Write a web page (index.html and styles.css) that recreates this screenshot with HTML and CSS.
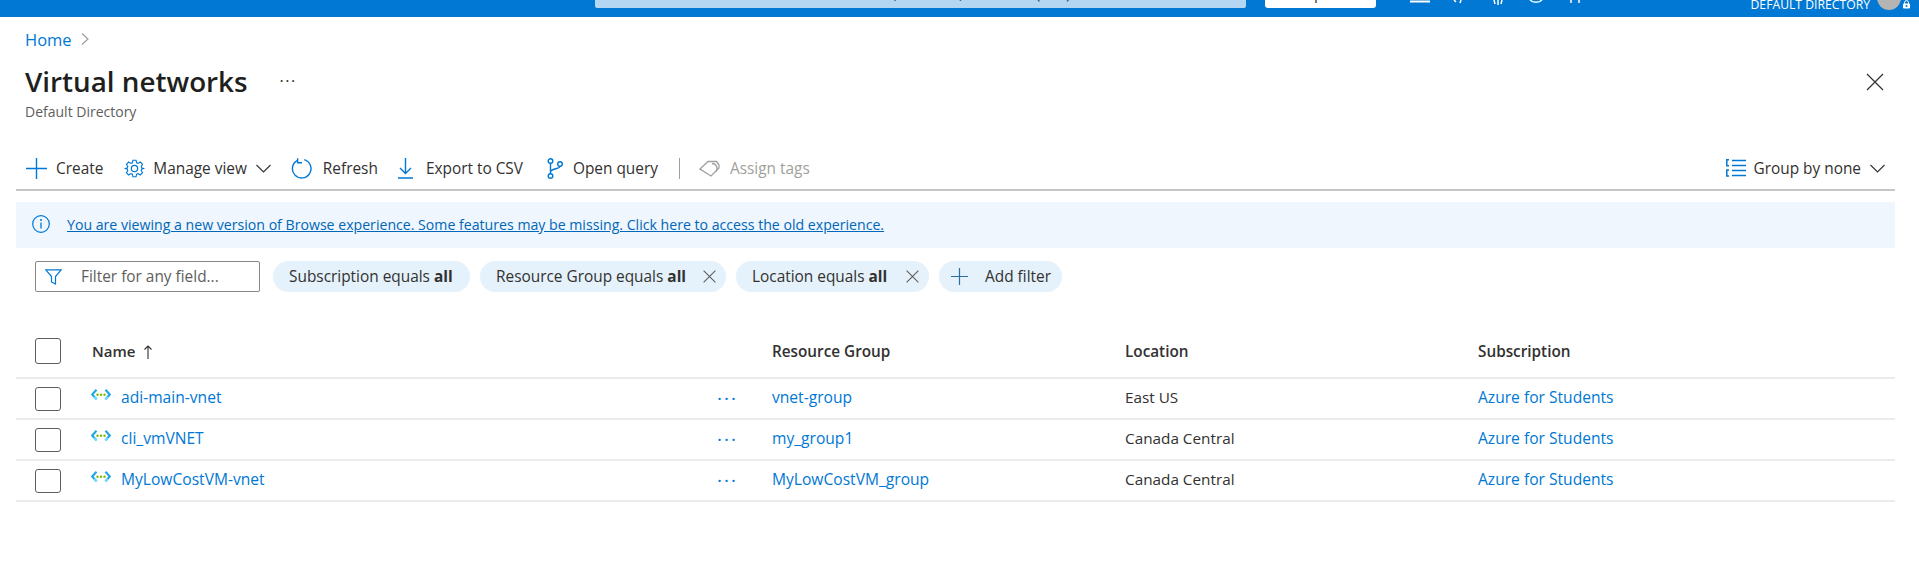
FILE: index.html
```html
<!DOCTYPE html>
<html lang="en">
<head>
	<meta charset="utf-8">
	<title>Virtual networks - Microsoft Azure</title>
	<link rel="stylesheet" href="styles.css">
</head>
<body>
	<!-- Top bar, the page is scrolled so only its lower edge shows -->
	<header class="topbar">
		<div class="search"><span>Search resources, services, and docs (G+/)</span></div>
		<div class="copilot"><span>Copilot</span></div>
		<div class="top-icons">
			<svg width="20" height="4" viewBox="0 0 20 4"><path d="M0 1.5h20" stroke="#fff" stroke-width="2"/></svg>
			<svg width="20" height="4" viewBox="0 0 20 4"><path d="M5 0l2 2M12 0l-1 3" stroke="#fff" stroke-width="1.5"/></svg>
			<svg width="20" height="6" viewBox="0 0 20 6"><path d="M6 0l1 4M10 0v5M14 0l-1 4" stroke="#fff" stroke-width="1.5"/></svg>
			<svg width="20" height="4" viewBox="0 0 20 4"><path d="M3 0c3 3 9 3 12 0" stroke="#fff" stroke-width="1.5" fill="none"/></svg>
			<svg width="20" height="4" viewBox="0 0 20 4"><path d="M5 0v3M13 0v3" stroke="#fff" stroke-width="1.5"/></svg>
		</div>
		<div class="account">
			<span class="tenant">DEFAULT DIRECTORY</span>
			<span class="avatar"></span>
			<svg class="lock" width="9" height="9" viewBox="0 0 9 9"><path d="M2.5 4V2.6a2 2 0 0 1 4 0V4" stroke="#fff" fill="none"/><rect x="1" y="3.6" width="7" height="5" rx="1" fill="#fff"/><circle cx="4.5" cy="6" r="1" fill="#0078d4"/></svg>
		</div>
	</header>

	<nav class="breadcrumb"><a href="#">Home</a>
		<svg width="10" height="14" viewBox="0 0 10 14"><path d="M2 1.5l6 5.500-6 5.500" stroke="#a19f9d" stroke-width="1.2" fill="none"/></svg>
	</nav>

	<div class="title-row">
		<h1>Virtual networks</h1>
		<span class="title-more">&middot;&middot;&middot;</span>
		<svg class="close" width="18" height="18" viewBox="0 0 18 18"><path d="M1 1l16 16M17 1L1 17" stroke="#323130" stroke-width="1.2"/></svg>
	</div>
	<p class="subtitle">Default Directory</p>

	<!-- Command bar -->
	<div class="toolbar">
		<button class="cmd cmd-create">
			<svg width="21" height="21" viewBox="0 0 21 21"><path d="M10.5 0v21M0 10.5h21" stroke="#0078d4" stroke-width="1.4"/></svg>
			Create
		</button>
		<button class="cmd cmd-manage">
			<svg width="21" height="21" viewBox="0 0 24 24" fill="none" stroke="#0078d4" stroke-width="1.4"><circle cx="12" cy="12" r="3.6"/><path d="M10 1.5h4l.7 3.2 1.9.8 2.8-1.7 2.8 2.8-1.7 2.8.8 1.9 3.2.7v0l-3.2.7-.8 1.9 1.7 2.8-2.8 2.8-2.8-1.7-1.9.8-.7 3.2h-4l-.7-3.2-1.9-.8-2.8 1.7-2.8-2.8 1.7-2.8-.8-1.9-3.2-.7v0l3.2-.7.8-1.9-1.7-2.8 2.8-2.8 2.8 1.7 1.9-.8z" transform="translate(1.2 1.2) scale(.9)"/></svg>
			Manage view
			<svg class="chev" width="15" height="9" viewBox="0 0 15 9"><path d="M.5 1l7 7 7-7" stroke="#323130" stroke-width="1.1" fill="none"/></svg>
		</button>
		<button class="cmd cmd-refresh">
			<svg width="21" height="21" viewBox="0 0 21 21" fill="none" stroke="#0078d4" stroke-width="1.4"><path d="M6.6 2.3a9.3 9.3 0 1 0 6.6-.6"/><path d="M6.6 .2v4.6h4.4"/></svg>
			Refresh
		</button>
		<button class="cmd cmd-export">
			<svg width="15" height="21" viewBox="0 0 15 21" fill="none" stroke="#0078d4" stroke-width="1.4"><path d="M7.5 0v15M2 10l5.5 5.5L13 10M0 20h15"/></svg>
			Export to CSV
		</button>
		<button class="cmd cmd-query">
			<svg width="16" height="21" viewBox="0 0 16 21" fill="none" stroke="#0078d4" stroke-width="1.4"><circle cx="3.5" cy="3" r="2.3"/><circle cx="3.5" cy="18" r="2.3"/><circle cx="13" cy="6" r="2.3"/><path d="M3.5 5.3v10.4M13 8.3c0 3-9.500 2-9.500 6"/></svg>
			Open query
		</button>
		<span class="cmd-sep"></span>
		<button class="cmd cmd-tags" disabled>
			<svg width="21" height="17" viewBox="0 0 21 17" fill="none" stroke="#a19f9d" stroke-width="1.3"><path d="M1 9l8-7.500h8.500L20 5v3l-8 8z"/><path d="M13 3.500a5 5 0 0 1 4 8"/></svg>
			Assign tags
		</button>
		<button class="cmd cmd-group">
			<svg width="20" height="18" viewBox="0 0 20 18" fill="none" stroke="#0078d4" stroke-width="1.500"><path d="M6 1.500h14M6 6.500h14M6 11.500h14M6 16.500h14M3 .8H.8v6H3M3 11h-2.200v6H3"/></svg>
			Group by none
			<svg class="chev" width="15" height="9" viewBox="0 0 15 9"><path d="M.5 1l7 7 7-7" stroke="#323130" stroke-width="1.1" fill="none"/></svg>
		</button>
	</div>

	<div class="banner">
		<svg width="18" height="18" viewBox="0 0 18 18" fill="none"><circle cx="9" cy="9" r="8.300" stroke="#0078d4" stroke-width="1.200"/><path d="M9 7.500v6" stroke="#0078d4" stroke-width="1.300"/><circle cx="9" cy="5" r="1" fill="#0078d4"/></svg>
		<a href="#">You are viewing a new version of Browse experience. Some features may be missing. Click here to access the old experience.</a>
	</div>

	<div class="filters">
		<div class="filter-box">
			<svg width="17" height="16" viewBox="0 0 17 16" fill="none"><path d="M.8 .8h15.400L10.500 7.500V15l-4-2V7.500z" stroke="#0078d4" stroke-width="1.200"/></svg>
			<span>Filter for any field...</span>
		</div>
		<div class="pill pill-sub">Subscription equals&nbsp;<b>all</b></div>
		<div class="pill pill-rg">Resource Group equals&nbsp;<b>all</b>
			<svg width="13" height="13" viewBox="0 0 13 13"><path d="M.6 .6l11.800 11.800M12.400 .6L.6 12.400" stroke="#605e5c" stroke-width="1.100"/></svg>
		</div>
		<div class="pill pill-loc">Location equals&nbsp;<b>all</b>
			<svg width="13" height="13" viewBox="0 0 13 13"><path d="M.6 .6l11.800 11.800M12.400 .6L.6 12.400" stroke="#605e5c" stroke-width="1.100"/></svg>
		</div>
		<div class="pill pill-add">
			<svg width="17" height="17" viewBox="0 0 17 17"><path d="M8.500 0v17M0 8.500h17" stroke="#2b6f9e" stroke-width="1.200"/></svg>
			Add filter
		</div>
	</div>

	<!-- Resource list -->
	<div class="grid">
		<div class="row head">
			<span class="check check-head"></span>
			<span class="name-head">Name <svg width="10" height="14" viewBox="0 0 10 14" fill="none"><path d="M5 14V1M1.500 4.500L5 1l3.500 3.500" stroke="#323130" stroke-width="1.100"/></svg></span>
			<span class="cell">Resource Group</span>
			<span class="cell">Location</span>
			<span class="cell">Subscription</span>
		</div>
		<div class="row">
			<span class="check"></span>
			<div class="name-cell">
				<svg class="vnet" width="20" height="12" viewBox="0 0 20 12"><use href="#vnet-icon"/></svg>
				<a class="cell" href="#">adi-main-vnet</a>
				<span class="more">&middot;&middot;&middot;</span>
			</div>
			<a class="cell" href="#">vnet-group</a>
			<span class="cell">East US</span>
			<a class="cell" href="#">Azure for Students</a>
		</div>
		<div class="row">
			<span class="check"></span>
			<div class="name-cell">
				<svg class="vnet" width="20" height="12" viewBox="0 0 20 12"><use href="#vnet-icon"/></svg>
				<a class="cell" href="#">cli_vmVNET</a>
				<span class="more">&middot;&middot;&middot;</span>
			</div>
			<a class="cell" href="#">my_group1</a>
			<span class="cell">Canada Central</span>
			<a class="cell" href="#">Azure for Students</a>
		</div>
		<div class="row">
			<span class="check"></span>
			<div class="name-cell">
				<svg class="vnet" width="20" height="12" viewBox="0 0 20 12"><use href="#vnet-icon"/></svg>
				<a class="cell" href="#">MyLowCostVM-vnet</a>
				<span class="more">&middot;&middot;&middot;</span>
			</div>
			<a class="cell" href="#">MyLowCostVM_group</a>
			<span class="cell">Canada Central</span>
			<a class="cell" href="#">Azure for Students</a>
		</div>
	</div>

	<svg width="0" height="0" class="defs">
		<defs>
			<g id="vnet-icon">
				<path d="M5.500 .8L1.200 5.500l4.300 4.700" fill="none" stroke="#1fa5e6" stroke-width="2.100"/>
				<path d="M14.500 .8l4.300 4.700-4.300 4.700" fill="none" stroke="#1fa5e6" stroke-width="2.100"/>
				<path d="M3.200 7.700l2.600 2.800M16.800 7.700l-2.600 2.800" stroke="#6fdcff" stroke-width="2.100"/>
				<circle cx="6.500" cy="5.800" r="1.200" fill="#7fba00"/>
				<circle cx="10" cy="5.800" r="1.200" fill="#7fba00"/>
				<circle cx="13.500" cy="5.800" r="1.200" fill="#7fba00"/>
			</g>
		</defs>
	</svg>
</body>
</html>
```

FILE: styles.css
```css
body {
	margin: 0;
	background: #fff;
	color: #323130;
	font-family: "Open Sans", "Noto Sans", sans-serif;
	font-size: 15.400px;
}

a {
	color: #0078d4;
	text-decoration: none;
}

button {
	font: inherit;
	background: none;
	border: 0;
	padding: 0;
	color: inherit;
}

/* top bar */
.topbar {
	height: 17px;
	background: #0078d4;
	display: flex;
	align-items: flex-start;
	overflow: hidden;
	position: relative;
}

.search {
	width: 651px;
	height: 8px;
	margin-left: 595px;
	background: #b3d6f2;
	border-radius: 0 0 2px 2px;
	text-align: center;
	overflow: hidden;
	line-height: 16px;
	color: #004578;
}

.search span {
	display: block;
	margin-top: -14px;
}

.copilot {
	width: 111px;
	height: 8px;
	margin-left: 19px;
	background: #fff;
	border-radius: 0 0 3px 3px;
	text-align: center;
	overflow: hidden;
	line-height: 16px;
}

.copilot span {
	display: block;
	margin-top: -14px;
}

.top-icons {
	display: flex;
	gap: 19px;
	margin-left: 34px;
}

.account {
	display: flex;
	margin-left: auto;
	align-items: flex-start;
	padding-right: 8px;
}

.tenant {
	color: #fff;
	font-size: 12.200px;
	line-height: 12px;
	margin-top: -1px;
}

.avatar {
	width: 24px;
	height: 24px;
	margin: -14px 0 0 7px;
	border-radius: 50%;
	background: #b4b4b4;
}

.lock {
	margin-left: 1px;
}

/* heading */
.breadcrumb {
	height: 46px;
	box-sizing: border-box;
	padding: 0 0 2px 25px;
	display: flex;
	align-items: center;
	gap: 8px;
	font-size: 16.500px;
}

.title-row {
	height: 38px;
	box-sizing: border-box;
	padding: 0 35px 2px 25px;
	display: flex;
	align-items: center;
}

.title-row .close {
	margin-top: 2px;
}

h1 {
	margin: 0;
	font-size: 27.800px;
	font-weight: 600;
	color: #201f1e;
}

.title-more {
	margin-left: 32px;
	font-size: 16px;
	letter-spacing: 1.500px;
}

.close {
	margin-left: auto;
}

.subtitle {
	margin: 0;
	height: 20px;
	line-height: 22px;
	padding-left: 25px;
	font-size: 14px;
	color: #605e5c;
}

/* command bar */
.toolbar {
	height: 42px;
	margin: 25px 24px 0 16px;
	padding: 1px 10px 0;
	border-bottom: 2px solid #c8c6c4;
	display: flex;
	align-items: center;
}

.cmd {
	display: flex;
	align-items: center;
	gap: 9px;
	margin-right: 21px;
	white-space: nowrap;
}

.chev {
	margin-left: 1px;
}

.cmd-manage {
	gap: 8px;
	margin-right: 20px;
}

.cmd-refresh {
	gap: 11px;
	margin-right: 20px;
}

.cmd-export {
	gap: 13px;
	margin-right: 24px;
}

.cmd-query {
	gap: 10px;
	margin-right: 21px;
}

.cmd-sep {
	width: 1px;
	height: 21px;
	background: #a19f9d;
	margin-right: 19px;
}

.cmd-tags {
	color: #a19f9d;
	gap: 10px;
}

.cmd-group {
	margin: 0 0 0 auto;
	gap: 8px;
}

/* info banner */
.banner {
	height: 46px;
	margin: 11px 24px 0 16px;
	background: #eff6fe;
	display: flex;
	align-items: center;
	gap: 17px;
	padding: 0 0 2px 16px;
	box-sizing: border-box;
}

.banner a {
	color: #0067b8;
	text-decoration: underline;
	font-size: 14.130px;
}

/* filters */
.filters {
	display: flex;
	gap: 10px;
	margin: 13px 0 0 35px;
	height: 31px;
	line-height: 29px;
}

.filter-box {
	width: 214px;
	margin-right: 3px;
	border: 1px solid #8a8886;
	border-radius: 2px;
	display: flex;
	align-items: center;
	gap: 19px;
	padding-left: 9px;
	color: #605e5c;
}

.pill {
	display: flex;
	align-items: center;
	border-radius: 16px;
	background: #e5f1fb;
	padding-left: 16px;
	white-space: nowrap;
}

.pill b {
	font-weight: 700;
}

.pill svg {
	margin-left: auto;
}

.pill-sub {
	width: 181px;
}

.pill-rg {
	width: 230px;
}

.pill-rg svg,
.pill-loc svg {
	margin-right: 10px;
}

.pill-loc {
	width: 177px;
}

.pill-add {
	width: 111px;
	padding-left: 12px;
	gap: 17px;
}

.pill-add svg {
	margin: 0;
}

/* list */
.grid {
	margin: 33px 24px 0 16px;
}

.row {
	display: grid;
	grid-template-columns: 76px 680px 353px 353px 1fr;
	align-items: center;
	height: 39px;
	border-bottom: 2px solid #edebe9;
	font-size: 15.600px;
}

.row span.cell {
	font-size: 15.300px;
}

.cell {
	margin-bottom: 4px;
}

.row.head {
	height: 52px;
	font-weight: 600;
}

.row.head .cell {
	margin-bottom: 0;
}

.check {
	width: 24px;
	height: 22px;
	margin-left: 19px;
	border: 1px solid #605e5c;
	border-radius: 3px;
}

.check-head {
	height: 24px;
}

.name-head {
	font-size: 15px;
}

.name-head svg {
	margin-left: 4px;
	vertical-align: -2px;
}

.name-cell {
	display: flex;
	align-items: center;
}

.vnet {
	margin: -8px 0 0 -1px;
}

.name-cell a {
	margin-left: 10px;
}

.more {
	margin: 0 34px 0 auto;
	color: #0078d4;
	font-size: 19px;
	letter-spacing: 2px;
	line-height: 1;
}

.defs {
	position: absolute;
}
```
